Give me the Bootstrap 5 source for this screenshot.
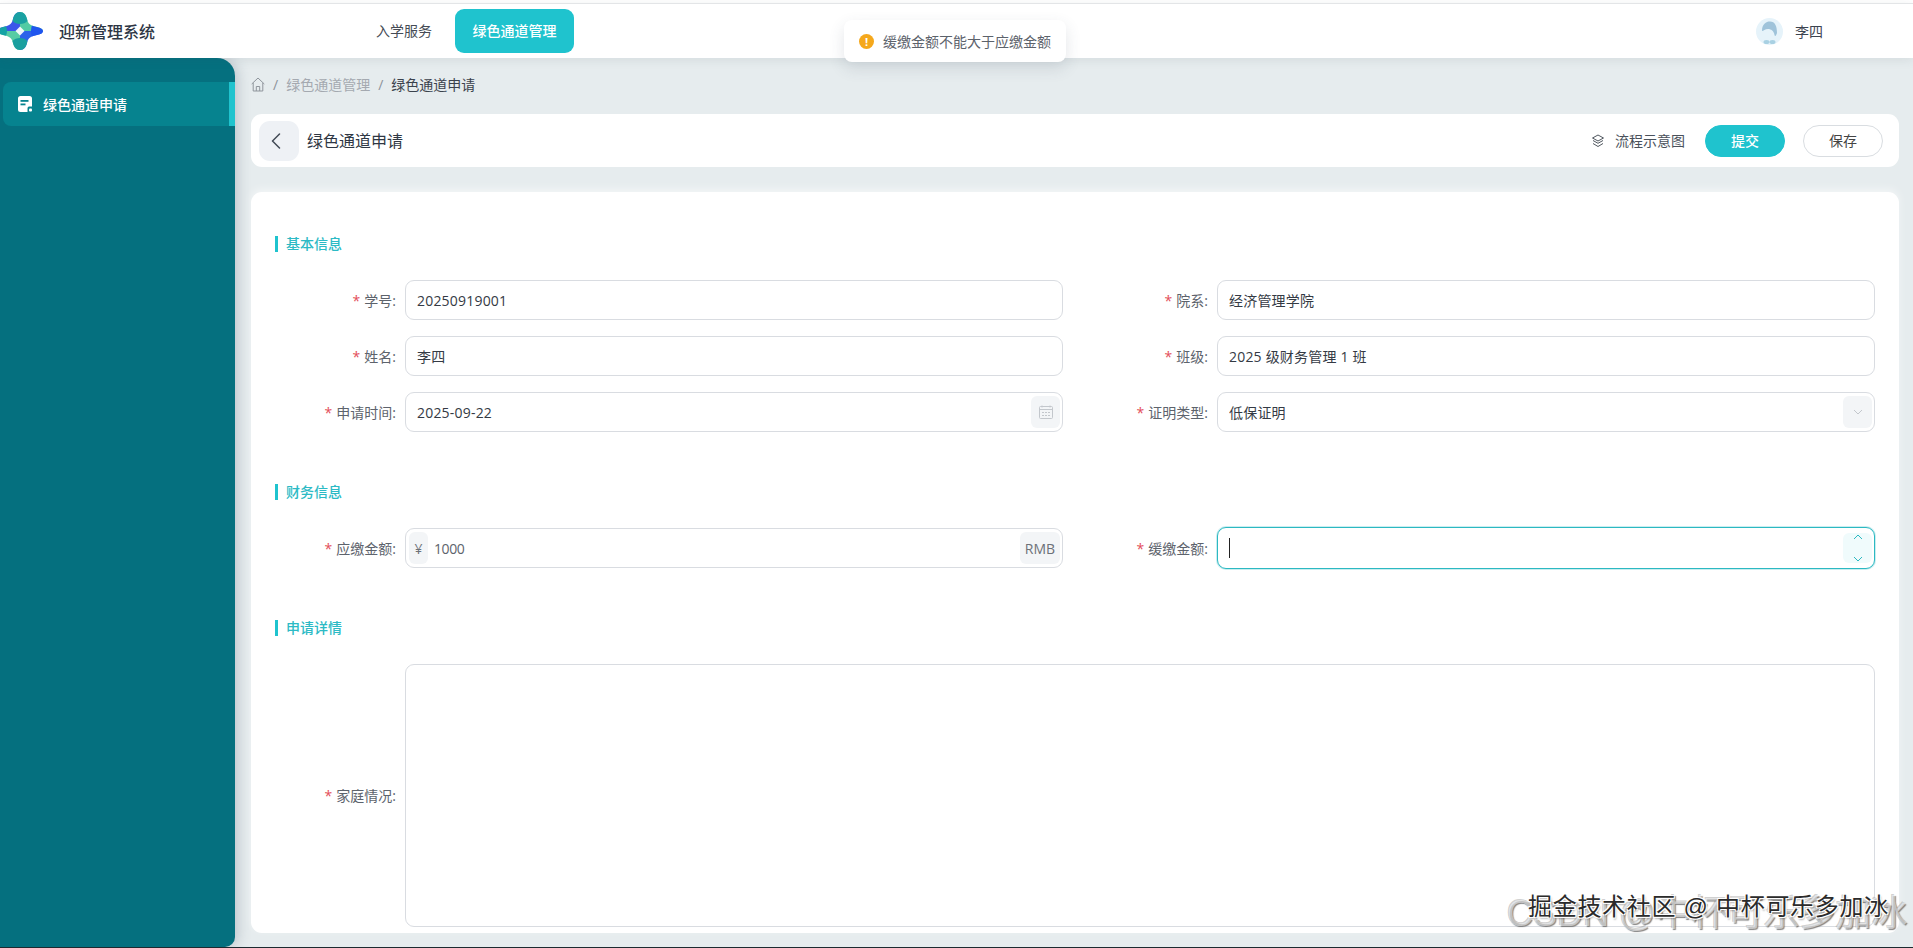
<!DOCTYPE html>
<html lang="zh-CN">
<head>
<meta charset="utf-8">
<title>迎新管理系统</title>
<link href="https://cdn.jsdelivr.net/npm/bootstrap@5.3.0/dist/css/bootstrap.min.css" rel="stylesheet">
<style>
html,body{height:948px;overflow:hidden}
body{background:#1c2a30;font-family:"Open Sans","Noto Sans CJK SC",sans-serif;font-size:14px;color:#333}
.appshell{height:947px;background:#e6ecee;position:relative;overflow:hidden;display:flex;flex-direction:column}
.topbar{height:55px;flex:none;background:#fff;position:relative;z-index:3;box-shadow:0 2px 10px rgba(60,80,90,.10);border-top:1px solid #e3e5e7;padding:0;margin:0;align-items:flex-start;flex-wrap:nowrap;justify-content:flex-start}
.topline{height:3px;background:#fff;flex:none;position:relative;z-index:3}
.logomark{display:block;width:44px;height:40px;margin-top:7px;flex:none}
.brandname{font-size:16px;font-weight:500;color:#2d3644;margin:16px 0 0 15px;line-height:24px;width:299px;flex:none}
.tabs{gap:5px;margin-top:5px;height:44px}
.tabs .nav-link{height:44px;padding:0 18px;line-height:44px;font-size:14px;color:#454b55;border-radius:9px}
.tabs .nav-link.active{background:#1fc3ce;color:#fff;font-weight:500;padding:0 17.5px}
.whois{margin-left:auto;margin-right:90px;margin-top:13px;height:28px;gap:12px;font-size:14px;color:#3c4450}
.workrow{flex:1;display:flex;min-height:0}
.sidepanel{width:235px;flex:none;background:#05707f;border-radius:0 18px 10px 0;position:relative;z-index:2;box-shadow:2px 0 14px rgba(60,80,100,.28);padding:24px 0 0 3px}
.sideitem{height:44px;background:#06838f;border-radius:8px 0 0 8px;border-right:6px solid #1fc3ce;color:#fff;font-weight:500;gap:11px;padding-left:15px;font-size:14px}
.mainpane{flex:1;min-width:0;padding:0 14px 14px 16px;display:flex;flex-direction:column}
.crumbs{height:56px;flex:none;display:flex;align-items:center;margin:0;padding-bottom:3px}
.crumbs .breadcrumb{margin:0;font-size:14px;align-items:center;--bs-breadcrumb-divider-color:#8d939b;--bs-breadcrumb-item-active-color:#3b424c}
.crumbs .breadcrumb-item a{color:#a4a9b0;text-decoration:none}
.headcard{height:53px;flex:none;border:0;border-radius:11px;flex-direction:row;align-items:center;padding:0 16px 0 8px;box-shadow:none}
.backbtn{width:40px;height:40px;background:#eef1f5;border:0;border-radius:11px;padding:0 6px 0 0;display:flex;align-items:center;justify-content:center}
.headtitle{font-size:16px;color:#2f3744;font-weight:400;margin-left:8px}
.flowlink{gap:10px;color:#4a515b;font-size:14px;margin-right:20px}
.pillbtn{width:80px;height:32px;padding:0;font-size:14px;line-height:30px;border-radius:16px}
.pillmain{background:#1fc3ce;color:#fff;border:1px solid #1fc3ce;font-weight:500}
.pillplain{background:#fff;color:#444;border:1px solid #d9dde1;margin-left:18px}
.formcard{flex:1;margin-top:25px;border:0;border-radius:11px;padding:44px 24px 6px;min-height:0;box-shadow:0 -3px 8px rgba(255,255,255,.5)}
.secthead{height:16px;line-height:16px;border-left:3px solid #1fc3ce;padding-left:8px;font-size:14px;font-weight:500;color:#2cbac5;margin-bottom:28px}
.secthead.later{margin-top:52px}
.fieldrow{display:flex;align-items:center;height:40px;margin-bottom:16px}
.fieldrow:last-child{margin-bottom:0}
.flabel{width:130px;flex:none;padding-right:9px;text-align:right;color:#5d636c;font-size:14px;margin:0}
.flabel i{font-style:normal;color:#e34d59;margin-right:4px}
.fbox{flex:1;min-width:0;height:40px;border:1px solid #d9dce1;border-radius:9px;display:flex;align-items:center;padding-right:2px;background:#fff}
.fbox .form-control,.fbox .form-select{border:0;background:transparent;box-shadow:none;height:38px;padding:0 0 0 11px;font-size:14px;color:#343a44;border-radius:9px;letter-spacing:.2px}
.fbox .form-select{background-image:none}
.addon{flex:none;width:29px;height:32px;background:#f3f5f7;border-radius:6px;display:flex;align-items:center;justify-content:center;color:#6c7178;font-size:14px}
.addon.lead-sign{width:19px;margin-left:3px}
.addon.tail-unit{width:40px}
.fbox .form-control.amount{color:#5d636c;padding-left:6px;letter-spacing:-.4px}
.fbox.focused{height:42px;margin:-1px 0;border-color:#2cb9c2;box-shadow:0 0 0 1px rgba(44,185,194,.25);position:relative}
.addon.stepper{background:#f0fbfc;height:30px;flex-direction:column;justify-content:space-between;padding:1px 0}
.caretmark{position:absolute;left:11px;top:10px;width:1px;height:20px;background:#222}
.fieldrow.tallrow{height:263px;margin-top:0;margin-bottom:0}
.fbox.tallbox{height:263px}
.fbox.tallbox .form-control{height:100%;resize:none}
.toastbox{position:absolute;left:844px;top:20px;width:222px;height:42px;background:#fff;border-radius:8px;box-shadow:0 6px 16px rgba(60,70,90,.14);z-index:5;gap:9px;padding-left:15px;color:#5c626b;font-size:14px}
.toastdot{width:15px;height:15px;border-radius:50%;background:#f5a81c;color:#fff;font-size:11px;font-weight:700;line-height:15px;text-align:center;flex:none}
.stamp{position:absolute;white-space:nowrap;z-index:6;pointer-events:none;line-height:1}
.stamp-back{left:1507px;top:896px;font-size:36px;color:rgba(255,255,255,.55);font-family:"Liberation Sans","Noto Sans CJK SC",sans-serif;text-shadow:1px 1px 1px rgba(90,90,90,.75),-1px -1px 0 rgba(150,150,150,.45)}
.stamp-front{left:1528px;top:895px;font-size:24px;letter-spacing:.7px;color:#2b2b2b;font-family:"Liberation Sans","Noto Sans CJK SC",sans-serif;text-shadow:1px 1px 0 #fff,-1px -1px 0 #fff,1px -1px 0 #fff,-1px 1px 0 #fff,1px 2px 2px rgba(0,0,0,.35)}
</style>
</head>
<body>
<div class="appshell">
  <div class="topline"></div>
  <nav class="navbar topbar">
    <svg class="logomark" viewBox="0 0 44 40" aria-hidden="true">
      <defs>
        <clipPath id="starclip"><path d="M20 1C24 1 26 4 27 8C28 13 31 15 37 16C41 17 43 18 43 20C43 22 41 23 37 24C31 25 28 27 27 32C26 36 24 39 20 39C16 39 14 36 13 32C12 27 9 25 3 24C-1 23-3 22-3 20C-3 18-1 17 3 16C9 15 12 13 13 8C14 4 16 1 20 1Z"/></clipPath>
      </defs>
      <g clip-path="url(#starclip)">
        <rect x="-3" y="0" width="23" height="20" fill="#3b56ea"/>
        <rect x="20" y="0" width="24" height="20" fill="#52cba3"/>
        <rect x="-3" y="20" width="23" height="20" fill="#57cca4"/>
        <rect x="20" y="20" width="24" height="20" fill="#2c62ea"/>
        <circle cx="20" cy="2" r="11" fill="#1aa1a2"/>
        <circle cx="20" cy="38" r="11" fill="#1a9f9f"/>
        <circle cx="-5" cy="20" r="12" fill="#15a3a4"/>
        <circle cx="45" cy="20" r="14" fill="#1f55ee"/>
      </g>
      <path d="M20 15.500 24.500 20 20 24.500 15.500 20Z" fill="#fff" opacity=".92"/>
    </svg>
    <span class="brandname">迎新管理系统</span>
    <ul class="nav tabs">
      <li class="nav-item"><a class="nav-link" href="#">入学服务</a></li>
      <li class="nav-item"><a class="nav-link active" href="#">绿色通道管理</a></li>
    </ul>
    <div class="whois d-flex align-items-center">
      <svg width="27" height="27" viewBox="0 0 27 27" aria-hidden="true">
        <circle cx="13.5" cy="13.5" r="13.5" fill="#e6f3fa"/>
        <path d="M6 13 C6 6 10 3.500 14 3.500 C19 3.500 21 8 21 15 C20 18 19 19 18.500 17 C18 13 15 11 12 11 C9 11 7.500 13 6 13Z" fill="#9fc3da"/>
        <ellipse cx="10.500" cy="24" rx="3" ry="2" fill="#a9d1e3"/>
        <ellipse cx="16.500" cy="24" rx="3" ry="2" fill="#a9d1e3"/>
      </svg>
      <span>李四</span>
    </div>
  </nav>
  <div class="workrow">
    <aside class="sidepanel">
      <div class="sideitem d-flex align-items-center">
        <svg width="14" height="16" viewBox="0 0 14 16" aria-hidden="true">
          <path d="M2.500 0H11.500A2.500 2.500 0 0 1 14 2.500V10.500H12A2 2 0 0 0 9.500 12.500V16H2.500A2.500 2.500 0 0 1 0 13.500V2.500A2.500 2.500 0 0 1 2.500 0Z" fill="#fff"/>
          <rect x="2.500" y="4" width="8" height="1.800" fill="#06838f"/>
          <rect x="2.500" y="7.500" width="5" height="1.800" fill="#06838f"/>
          <rect x="11" y="12.500" width="3" height="3" rx="1" fill="#fff"/>
        </svg>
        <span>绿色通道申请</span>
      </div>
    </aside>
    <main class="mainpane">
      <div class="crumbs">
        <ol class="breadcrumb">
          <li class="breadcrumb-item d-flex align-items-center">
            <svg width="14" height="15" viewBox="0 0 14 15" fill="none" stroke="#8f959c" stroke-width="1" aria-hidden="true">
              <path d="M.7 7 7 1l6.300 6"/><path d="M2.200 6v8h9.600V6"/><path d="M5.300 14V9.500h3.400V14"/>
            </svg>
          </li>
          <li class="breadcrumb-item"><a href="#">绿色通道管理</a></li>
          <li class="breadcrumb-item active" aria-current="page">绿色通道申请</li>
        </ol>
      </div>
      <section class="card headcard">
        <button class="backbtn" type="button" aria-label="返回">
          <svg width="10" height="16" viewBox="0 0 10 16" fill="none" stroke="#414a56" stroke-width="1.500" stroke-linecap="round" stroke-linejoin="round"><path d="M8.500 1 1.500 8l7 7"/></svg>
        </button>
        <span class="headtitle">绿色通道申请</span>
        <div class="ms-auto d-flex align-items-center">
          <div class="flowlink d-flex align-items-center">
            <svg width="14" height="14" viewBox="0 0 14 14" fill="none" stroke="#50575f" stroke-width="1" stroke-linejoin="round" aria-hidden="true">
              <path d="M7 1 12.500 4 7 7 1.500 4Z"/><path d="M2 6.500 7 9.300 12 6.500"/><path d="M2 9.500 7 12.500 12 9.500"/>
            </svg>
            <span>流程示意图</span>
          </div>
          <button class="btn pillbtn pillmain" type="button">提交</button>
          <button class="btn pillbtn pillplain" type="button">保存</button>
        </div>
      </section>
      <section class="card formcard">
        <div class="secthead">基本信息</div>
        <div class="row gx-4">
          <div class="col-6">
            <div class="fieldrow"><label class="flabel"><i>*</i>学号:</label><div class="fbox"><input class="form-control" value="20250919001"></div></div>
            <div class="fieldrow"><label class="flabel"><i>*</i>姓名:</label><div class="fbox"><input class="form-control" value="李四"></div></div>
            <div class="fieldrow"><label class="flabel"><i>*</i>申请时间:</label><div class="fbox"><input class="form-control" value="2025-09-22">
              <span class="addon"><svg width="14" height="14" viewBox="0 0 14 14" fill="none" stroke="#c3c7cc" stroke-width="1"><rect x=".5" y="1.500" width="13" height="12" rx="1"/><path d="M.5 4.500h13M3 .5v2M11 .5v2"/><path d="M3 7.500h2M6 7.500h2M9 7.500h2M3 10.500h2M6 10.500h2M9 10.500h2"/></svg></span></div></div>
          </div>
          <div class="col-6">
            <div class="fieldrow"><label class="flabel"><i>*</i>院系:</label><div class="fbox"><input class="form-control" value="经济管理学院"></div></div>
            <div class="fieldrow"><label class="flabel"><i>*</i>班级:</label><div class="fbox"><input class="form-control" value="2025 级财务管理 1 班"></div></div>
            <div class="fieldrow"><label class="flabel"><i>*</i>证明类型:</label><div class="fbox"><select class="form-select"><option>低保证明</option></select>
              <span class="addon"><svg width="10" height="6" viewBox="0 0 10 6" fill="none" stroke="#c3c7cc" stroke-width="1"><path d="M1 1l4 4 4-4"/></svg></span></div></div>
          </div>
        </div>
        <div class="secthead later">财务信息</div>
        <div class="row gx-4">
          <div class="col-6">
            <div class="fieldrow"><label class="flabel"><i>*</i>应缴金额:</label><div class="fbox"><span class="addon lead-sign">¥</span><input class="form-control amount" value="1000"><span class="addon tail-unit">RMB</span></div></div>
          </div>
          <div class="col-6">
            <div class="fieldrow"><label class="flabel"><i>*</i>缓缴金额:</label><div class="fbox focused"><input class="form-control" value=""><span class="caretmark"></span>
              <span class="addon stepper"><svg width="10" height="6" viewBox="0 0 10 6" fill="none" stroke="#2cb9c2" stroke-width="1"><path d="M1 5l4-4 4 4"/></svg><svg width="10" height="6" viewBox="0 0 10 6" fill="none" stroke="#2cb9c2" stroke-width="1"><path d="M1 1l4 4 4-4"/></svg></span></div></div>
          </div>
        </div>
        <div class="secthead later">申请详情</div>
        <div class="fieldrow tallrow"><label class="flabel"><i>*</i>家庭情况:</label><div class="fbox tallbox"><textarea class="form-control"></textarea></div></div>
      </section>
    </main>
  </div>
  <div class="toastbox d-flex align-items-center"><span class="toastdot">!</span><span>缓缴金额不能大于应缴金额</span></div>
  <div class="stamp stamp-back">CSDN @中杯可乐多加冰</div>
  <div class="stamp stamp-front">掘金技术社区 @ 中杯可乐多加冰</div>
</div>
<script src="https://cdn.jsdelivr.net/npm/bootstrap@5.3.0/dist/js/bootstrap.bundle.min.js"></script>
</body>
</html>
